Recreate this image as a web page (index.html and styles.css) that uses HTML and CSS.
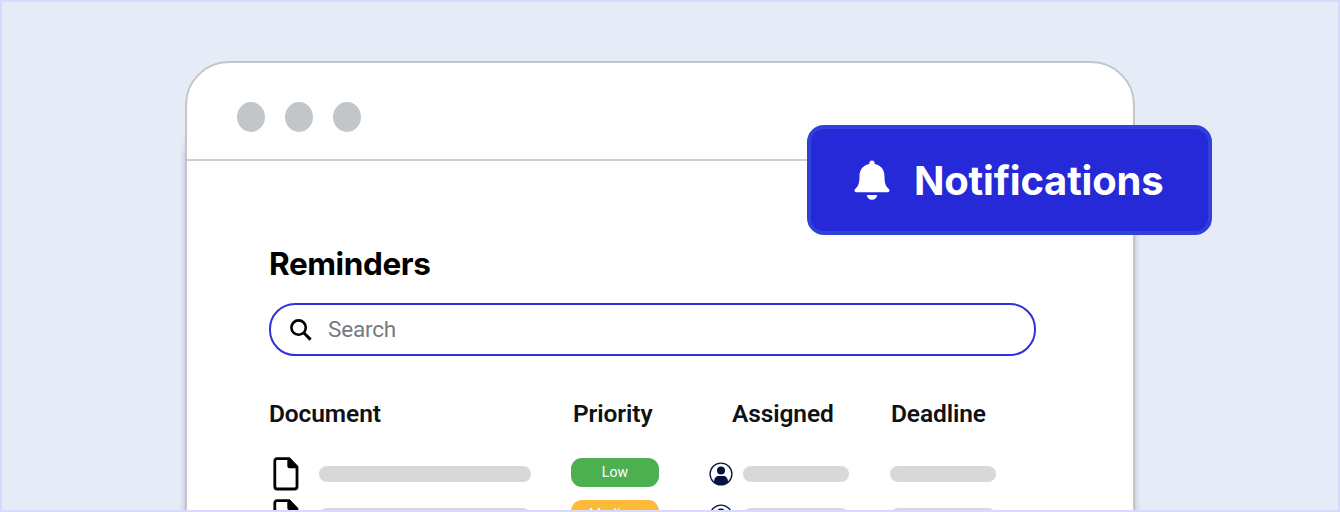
FILE: index.html
```html
<!DOCTYPE html>
<html lang="en">
<head>
<meta charset="utf-8">
<title>Reminders</title>
<link rel="stylesheet" href="styles.css">
</head>
<body>
<svg class="symbols" aria-hidden="true">
  <symbol id="file" viewBox="0 0 26 34">
    <path d="M4 1.7H16L24 10V29.5Q24 32 21.5 32H4.3Q1.8 32 1.8 29.5V4.2Q1.8 1.7 4 1.7Z" fill="none" stroke="#000" stroke-width="2.8"/>
    <path d="M14.3 1H17L25 9.2V11.2H16.5Q14.3 11.2 14.3 9Z"/>
  </symbol>
  <symbol id="user" viewBox="0 0 24 24">
    <circle cx="12" cy="12" r="10.9" fill="#fff" stroke="#0a1a44" stroke-width="1.4"/>
    <circle cx="12" cy="8.6" r="4" fill="#04133d"/>
    <path d="M5 20C5 15.8 7.4 14 9.5 14H14.5C16.6 14 19 15.8 19 20C17 22.2 14.6 23 12 23S7 22.2 5 20Z" fill="#04133d"/>
  </symbol>
</svg>
<main class="stage">
  <section class="window">
    <header class="titlebar"><i class="dot"></i><i class="dot"></i><i class="dot"></i></header>
    <div class="content">
      <h1 class="title">Reminders</h1>
      <div class="search">
        <svg class="search-icon" viewBox="0 0 22 22"><circle cx="8.6" cy="8.6" r="7.2" fill="none" stroke="#000" stroke-width="2.6"/><path d="M13.5 13.5L20.6 20.6" stroke="#000" stroke-width="3"/></svg>
        <span class="placeholder">Search</span>
      </div>
      <div class="row head">
        <span>Document</span><span>Priority</span><span>Assigned</span><span>Deadline</span>
      </div>
      <div class="row">
        <div class="cell"><svg class="file"><use href="#file"/></svg><i class="bar wide"></i></div>
        <div class="cell"><span class="badge low">Low</span></div>
        <div class="cell"><svg class="user"><use href="#user"/></svg><i class="bar"></i></div>
        <div class="cell"><i class="bar"></i></div>
      </div>
      <div class="row">
        <div class="cell"><svg class="file"><use href="#file"/></svg><i class="bar wide"></i></div>
        <div class="cell"><span class="badge medium">Medium</span></div>
        <div class="cell"><svg class="user"><use href="#user"/></svg><i class="bar"></i></div>
        <div class="cell"><i class="bar"></i></div>
      </div>
    </div>
  </section>
  <div class="notice">
    <svg class="bell" viewBox="0 0 36 40"><path d="M15.4 3.2a2.6 2.6 0 0 1 5.2 0V4.1C27 5.2 30.5 10 30.5 16C30.5 23 31.5 26 34.8 29C36.2 30.5 35.5 32.2 33.6 32.2H2.4C.5 32.2-.2 30.5 1.2 29C4.5 26 5.5 23 5.5 16C5.5 10 9 5.2 15.4 4.1Z"/><path d="M12.8 35H23.2C22.8 38.2 20.8 39.8 18 39.8S13.2 38.2 12.8 35Z"/></svg>
    <span class="notice-text">Notifications</span>
  </div>
</main>
</body>
</html>
```
FILE: styles.css
```css
* { box-sizing: border-box; }
body { margin: 0; }
.symbols { display: none; }
.stage {
  position: relative;
  width: 1340px;
  height: 512px;
  padding: 59px 0 0 183px;
  overflow: hidden;
  background: #e6ebf8;
  border: 2px solid #d9d9ff;
}
.window {
  width: 950px;
  height: 700px;
  background: #fff;
  border: 2px solid #c3c7ca;
  border-radius: 44px;
  box-shadow: 0 52px 7px -2px rgba(70, 80, 105, .6);
}
.titlebar {
  display: flex;
  gap: 20px;
  height: 98px;
  padding: 39px 0 0 50px;
  border-bottom: 2px solid #cccfd2;
}
.dot { width: 28px; height: 30px; border-radius: 50%; background: #c2c6c9; }
.content { padding: 81px 0 0 82px; }
.title {
  margin: 0;
  height: 61px;
  font: 700 31.5px/44px Inter, sans-serif;
  letter-spacing: -.4px;
  color: #000;
}
.search {
  display: flex;
  align-items: center;
  width: 767px;
  height: 53px;
  padding-left: 19px;
  border: 2px solid #3030dd;
  border-radius: 26px;
}
.search-icon { width: 22px; height: 22px; }
.placeholder {
  margin-left: 16px;
  padding-bottom: 1px;
  font: 400 22.5px/30px Roboto, sans-serif;
  letter-spacing: -.2px;
  color: #747b83;
}
.row {
  display: grid;
  grid-template-columns: 302px 138px 181px 140px;
  height: 42px;
}
.row.head {
  grid-template-columns: 304px 159px 159px 140px;
  height: 101px;
  padding-top: 42px;
  font: 600 24.5px/32px Roboto, sans-serif;
  letter-spacing: -.1px;
  color: #0e1215;
}
.cell { display: flex; align-items: flex-start; }
.file { width: 26px; height: 34px; margin-left: 4px; }
.bar { width: 106px; height: 16px; margin-top: 9px; border-radius: 8px; background: #d8d8d8; }
.bar.wide { width: 212px; margin-left: 20px; }
.user { width: 24px; height: 24px; margin: 5px 10px 0 0; }
.badge {
  width: 88px;
  height: 29px;
  margin-top: .5px;
  border-radius: 11px;
  font: 400 14px/29px Roboto, sans-serif;
  letter-spacing: .2px;
  text-align: center;
  color: #fff;
}
.low { background: #4caf50; }
.medium { background: #ffb938; }
.notice {
  position: absolute;
  left: 805px;
  top: 123px;
  display: flex;
  align-items: center;
  width: 405px;
  height: 110px;
  padding-left: 43px;
  background: #2529d8;
  border: 4px solid #3040db;
  border-radius: 17px;
}
.bell { width: 36px; height: 40px; fill: #fff; }
.notice-text {
  margin-left: 24px;
  padding-top: 2px;
  font: 700 40px/50px Inter, sans-serif;
  letter-spacing: -.2px;
  color: #fff;
}
```
